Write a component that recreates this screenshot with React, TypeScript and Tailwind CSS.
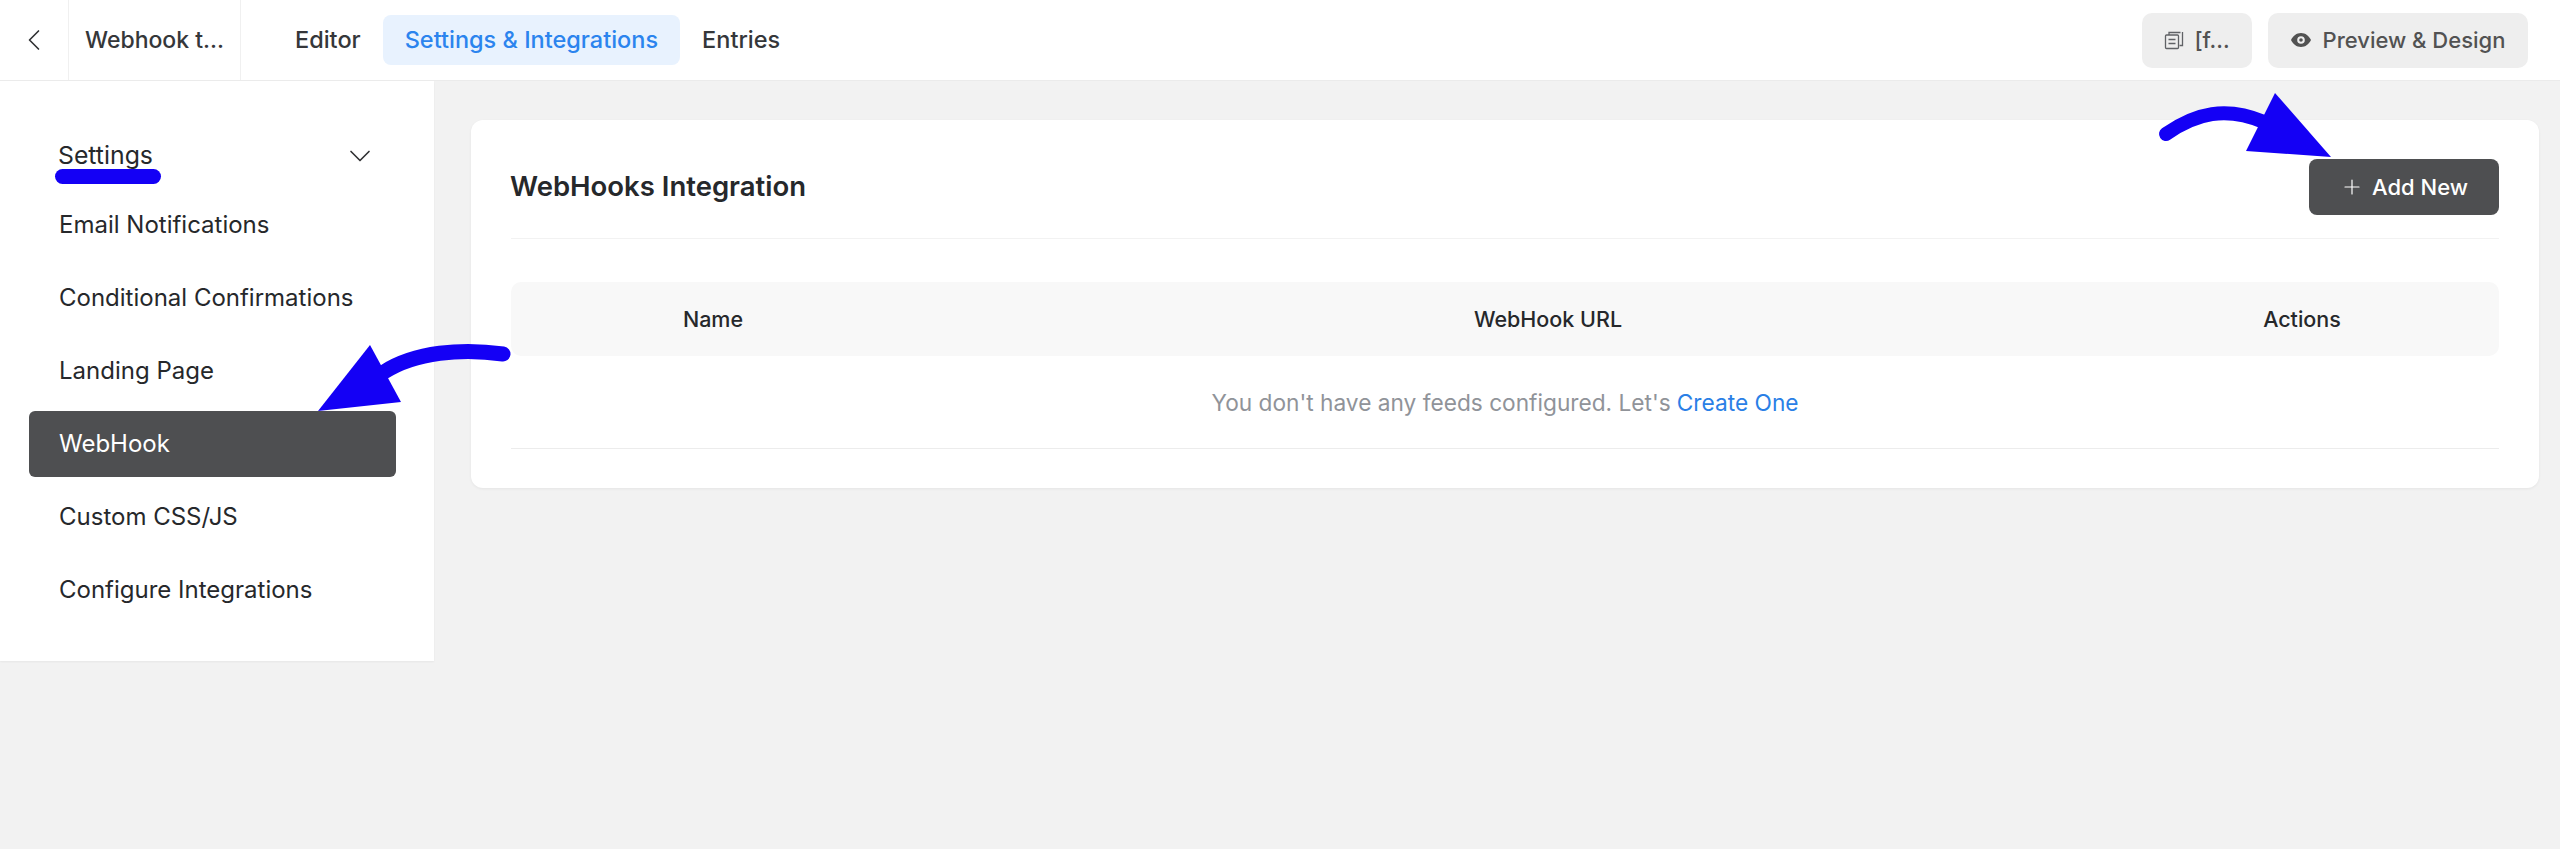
import React from "react";
import { ChevronLeft, ChevronDown, Plus } from "lucide-react";

const items = ["Email Notifications", "Conditional Confirmations", "Landing Page", "WebHook", "Custom CSS/JS", "Configure Integrations"];

function CopyIcon() {
  return (
    <svg width="20" height="20" viewBox="0 0 20 20" fill="none" stroke="#606266" strokeWidth="1.3">
      <rect x="1.500" y="5" width="13" height="13.500" rx="1" />
      <path d="M5 5V2.500h11.500M18.500 2v13.500h-3" />
      <path d="M4.500 9.500h7M4.500 13.500h7" />
    </svg>
  );
}

function EyeIcon() {
  return (
    <svg width="20" height="14" viewBox="0 0 20 14">
      <path fillRule="evenodd" fill="#525252" d="M10 0c4.400 0 8 2.800 10 7-2 4.200-5.600 7-10 7S2 11.200 0 7c2-4.200 5.600-7 10-7zm0 3.200a3.800 3.800 0 100 7.600 3.800 3.800 0 000-7.600zm0 2a1.800 1.800 0 110 3.600 1.800 1.800 0 010-3.600z" />
    </svg>
  );
}

export default function App() {
  return (
    <div className="relative min-h-[849px] bg-[#f2f2f2] font-['Inter',sans-serif] text-[#26282b] overflow-hidden">
      <header className="flex h-[81px] items-center bg-white border-b border-[#ebebeb] pr-[32px]">
        <div className="flex h-full w-[69px] items-center justify-center border-r border-[#f0f0f0]">
          <ChevronLeft size={36} strokeWidth={1.1} color="#303133" />
        </div>
        <div className="flex h-full w-[172px] items-center border-r border-[#f0f0f0] pl-[16px] text-[23px] font-medium text-[#35373a]">Webhook t...</div>
        <nav className="ml-[32px] flex items-center text-[23.5px] font-medium text-[#35373a]">
          <div className="flex h-[50px] items-center px-[22px]">Editor</div>
          <div className="flex h-[50px] items-center rounded-[8px] bg-[#e8f2fe] px-[22px] text-[#2b84ee]">Settings &amp; Integrations</div>
          <div className="flex h-[50px] items-center px-[22px]">Entries</div>
        </nav>
        <div className="ml-auto flex items-center gap-[16px] text-[22px] font-medium text-[#525252]">
          <div className="flex h-[55px] w-[110px] items-center justify-center gap-[10px] rounded-[10px] bg-[#eeeeee]">
            <CopyIcon />
            <span>[f...</span>
          </div>
          <div className="flex h-[55px] w-[260px] items-center justify-center gap-[12px] rounded-[10px] bg-[#eeeeee]">
            <EyeIcon />
            <span>Preview &amp; Design</span>
          </div>
        </div>
      </header>

      <div className="flex items-start">
        <aside className="w-[434px] shrink-0 bg-white pl-[29px] pr-[38px] pt-[39px] pb-[38px] shadow-[0_1px_2px_rgba(0,0,0,0.05)]">
          <div className="relative flex h-[72px] items-center justify-between pl-[29px] pr-[18px] text-[24.8px] text-[#26282b]">
            <span>Settings</span>
            <ChevronDown size={36} strokeWidth={1.1} color="#303133" />
            <div className="absolute left-[26px] top-[49px] h-[15px] w-[106px] rounded-full bg-[#1400f5]" />
          </div>
          <div className="flex flex-col gap-[7px]">
            {items.map((t) => (
              <div
                key={t}
                className={
                  t === "WebHook"
                    ? "flex h-[66px] items-center rounded-[6px] bg-[#4e4f51] pl-[30px] text-[24px] text-white"
                    : "flex h-[66px] items-center pl-[30px] text-[24px] text-[#26282b]"
                }
              >
                {t}
              </div>
            ))}
          </div>
        </aside>

        <main className="ml-[37px] mr-[21px] mt-[39px] h-[368px] flex-1 rounded-[12px] bg-white px-[40px] shadow-[0_1px_3px_rgba(0,0,0,0.06)]">
          <div className="flex h-[119px] items-center justify-between border-b border-[#f2f2f2] pt-[16px]">
            <h1 className="-ml-[1px] text-[27.5px] font-semibold text-[#26282b]">WebHooks Integration</h1>
            <button className="flex h-[56px] w-[190px] items-center justify-center gap-[8px] rounded-[8px] bg-[#4e4f51] text-[22px] font-medium text-white">
              <Plus size={24} strokeWidth={1.2} />
              <span>Add New</span>
            </button>
          </div>
          <div className="mt-[43px] grid h-[74px] grid-cols-[404px_1266px_242px] items-center rounded-[10px] bg-[#f8f8f8] text-center text-[21.5px] font-medium text-[#26282b]">
            <div>Name</div>
            <div>WebHook URL</div>
            <div>Actions</div>
          </div>
          <div className="flex h-[93px] items-center justify-center border-b border-[#ececec] pt-[2px] text-[22.7px] text-[#909399]">
            <span>You don't have any feeds configured. Let's</span>
            <span className="ml-[6px] text-[#2a7fe6]">Create One</span>
          </div>
        </main>
      </div>

      <svg className="pointer-events-none absolute left-0 top-0" width="2560" height="849" fill="none">
        <path d="M2166 134C2196 113 2226 106 2264 122" stroke="#1400f5" strokeWidth="14" strokeLinecap="round" />
        <path d="M2275 93L2246 151L2331 157Z" fill="#1400f5" />
        <path d="M503 354C462 348 415 352 384 372" stroke="#1400f5" strokeWidth="15" strokeLinecap="round" />
        <path d="M318 411L370 345L401 402Z" fill="#1400f5" />
      </svg>
    </div>
  );
}
